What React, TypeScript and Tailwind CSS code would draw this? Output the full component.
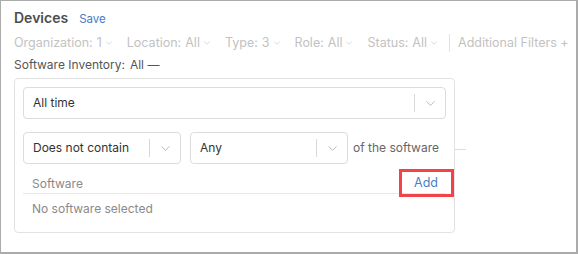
import { ChevronDown } from "lucide-react";

function Filter({ label, value }: { label: string; value: string }) {
  return (
    <span className="inline-flex shrink-0 items-center gap-[4px]">
      <span>{label}</span>
      <span className="inline-flex items-center gap-[2px]">
        {value}
        <ChevronDown className="size-[10px]" strokeWidth={1.5} />
      </span>
    </span>
  );
}

function Select({ value, className }: { value: string; className: string }) {
  return (
    <div
      className={`flex h-[32px] items-center rounded-[4px] border border-[#dcdcdc] bg-white ${className}`}
    >
      <span className="flex-1 whitespace-nowrap pl-[9px] text-[12px] text-[#333]">{value}</span>
      <span className="h-[18px] w-px bg-[#d8d8d8]" />
      <span className="flex w-[30px] items-center justify-center text-[#b5b5b5]">
        <ChevronDown className="size-[15px]" strokeWidth={1.5} />
      </span>
    </div>
  );
}

export default function App() {
  return (
    <div className="h-[254px] w-[578px] overflow-hidden border-t border-l border-r-2 border-b-2 border-[#ababab] bg-white font-['Inter','Liberation_Sans',sans-serif]">
      <div className="px-[13px] pt-[6px]">
        {/* 헤더 */}
        <div className="flex h-[20px] items-baseline gap-[11px]">
          <h1 className="text-[14px] font-semibold text-[#4d4d4d]">Devices</h1>
          <button className="text-[11.5px] text-[#4b7cc0]">Save</button>
        </div>

        {/* 필터 */}
        <div className="mt-[6px] flex h-[20px] items-center gap-[13px] whitespace-nowrap text-[12.5px] text-[#c2c2c2]">
          <Filter label="Organization:" value="1" />
          <Filter label="Location:" value="All" />
          <Filter label="Type:" value="3" />
          <Filter label="Role:" value="All" />
          <Filter label="Status:" value="All" />
          <span className="-ml-[3px] h-[18px] w-px shrink-0 bg-[#e2e2e2]" />
          <span className="-ml-[5px] shrink-0">Additional Filters +</span>
        </div>

        <div className="mt-[3px] flex h-[18px] items-center gap-[5px] whitespace-nowrap text-[12px] text-[#555]">
          <span>Software Inventory:</span>
          <span>All —</span>
        </div>

        {/* 패널 */}
        <div className="relative mt-[4px] h-[155px] w-[441px] rounded-[4px] border border-[#e2e2e2] px-[8px] pt-[8px]">
          <Select value="All time" className="w-[423px]" />

          <div className="mt-[13px] flex items-center gap-[9px]">
            <Select value="Does not contain" className="w-[158px]" />
            <Select value="Any" className="w-[158px]" />
            <span className="-ml-[4px] whitespace-nowrap text-[12px] text-[#666]">of the software</span>
          </div>
          <span className="absolute right-[-12px] top-[70px] h-px w-[11px] bg-[#dcdcdc]" />

          <div className="flex h-[30px] w-[423px] items-end justify-between border-b border-[#e8e8e8] pl-[9px]">
            <span className="text-[12px] text-[#8a8a8a]">Software</span>
            <span className="relative mr-[8px] text-[12.5px] text-[#4a7fc4]">
              Add
              <span className="absolute -left-[15px] -right-[16px] -top-[5px] -bottom-[4px] border-[3px] border-[#f04448]" />
            </span>
          </div>
          <div className="flex h-[30px] items-center pl-[9px] text-[12px] text-[#8a8a8a]">
            No software selected
          </div>
        </div>
      </div>
    </div>
  );
}
